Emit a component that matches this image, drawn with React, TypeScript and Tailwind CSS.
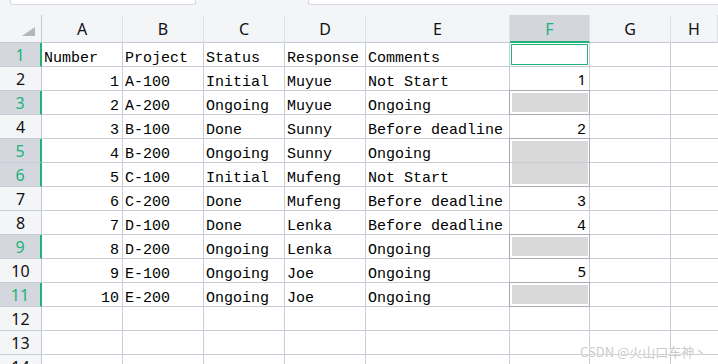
import React from "react";

type FKind = "active" | "num" | "gray" | "grayTop" | "grayBottom" | "none";
type Row = { n: number; cells: string[]; f: FKind; fv?: string; fSans?: boolean; sel?: boolean };

const rows: Row[] = [
  { n: 1, cells: ["Number", "Project", "Status", "Response", "Comments"], f: "active", sel: true },
  { n: 2, cells: ["1", "A-100", "Initial", "Muyue", "Not Start"], f: "num", fv: "1", fSans: true },
  { n: 3, cells: ["2", "A-200", "Ongoing", "Muyue", "Ongoing"], f: "gray", sel: true },
  { n: 4, cells: ["3", "B-100", "Done", "Sunny", "Before deadline"], f: "num", fv: "2" },
  { n: 5, cells: ["4", "B-200", "Ongoing", "Sunny", "Ongoing"], f: "grayTop", sel: true },
  { n: 6, cells: ["5", "C-100", "Initial", "Mufeng", "Not Start"], f: "grayBottom", sel: true },
  { n: 7, cells: ["6", "C-200", "Done", "Mufeng", "Before deadline"], f: "num", fv: "3" },
  { n: 8, cells: ["7", "D-100", "Done", "Lenka", "Before deadline"], f: "num", fv: "4" },
  { n: 9, cells: ["8", "D-200", "Ongoing", "Lenka", "Ongoing"], f: "gray", sel: true },
  { n: 10, cells: ["9", "E-100", "Ongoing", "Joe", "Ongoing"], f: "num", fv: "5", fSans: true },
  { n: 11, cells: ["10", "E-200", "Ongoing", "Joe", "Ongoing"], f: "gray", sel: true },
  { n: 12, cells: ["", "", "", "", ""], f: "none" },
  { n: 13, cells: ["", "", "", "", ""], f: "none" },
  { n: 14, cells: ["", "", "", "", ""], f: "none" },
];

const mono = { fontFamily: '"Liberation Mono", "Noto Sans CJK SC", monospace' };
const sans = { fontFamily: '"Noto Sans", "Liberation Sans", sans-serif' };

function FCell({ r }: { r: Row }) {
  const base = "relative border-r border-b border-[#c8ccd5] h-[24px]";
  if (r.f === "active") {
    return (
      <div className={base}>
        <div className="absolute left-[1px] top-[1px] right-[1px] bottom-[1px] border border-[#21b27a]" />
      </div>
    );
  }
  if (r.f === "num") {
    return (
      <div
        className={`${base} text-right pr-[3px] text-[15px] text-black whitespace-nowrap ${r.fSans ? "leading-[23px] pt-[1px]" : "leading-[23px] pt-[4px]"}`}
        style={r.fSans ? sans : mono}
      >
        {r.fv}
      </div>
    );
  }
  if (r.f === "gray") {
    return (
      <div className={`${base} pl-[2px] pr-[1px] py-[2px]`}>
        <div className="h-full bg-[#d9d9d9]" />
        <div className="absolute -left-px -top-px -right-px -bottom-px border border-[#a6aab2]" />
      </div>
    );
  }
  if (r.f === "grayTop") {
    return (
      <div className={`${base} pl-[2px] pr-[1px] pt-[2px]`}>
        <div className="h-full bg-[#d9d9d9]" />
        <div className="absolute -left-px -top-px -right-px -bottom-px border border-b-0 border-[#a6aab2]" />
      </div>
    );
  }
  if (r.f === "grayBottom") {
    return (
      <div className={`${base} pl-[2px] pr-[1px] pb-[2px]`}>
        <div className="h-full bg-[#d9d9d9]" />
        <div className="absolute -left-px top-0 -right-px -bottom-px border border-t-0 border-[#a6aab2]" />
      </div>
    );
  }
  return <div className={base} />;
}

export default function App() {
  const headers = ["A", "B", "C", "D", "E", "F", "G", "H"];
  return (
    <div className="w-[718px] h-[364px] overflow-hidden bg-white relative">
      {/* top strip */}
      <div className="h-[15px] bg-[#f4f5f7] flex items-start">
        <div className="ml-[10px] w-[186px] h-[5px] bg-white border border-t-0 border-[#d4d7dd] rounded-b-[3px]" />
        <div className="ml-[112px] flex-1 h-[5px] bg-white border border-t-0 border-r-0 border-[#d4d7dd] rounded-bl-[3px]" />
      </div>
      <div className="grid grid-cols-[42px_81px_81px_81px_81px_144px_80px_81px_1fr]">
        {/* header row */}
        <div className="h-[28px] bg-[#f4f5f7] border-r border-b border-[#c3c8d2] flex items-end justify-end pr-[6px] pb-[6px]">
          <svg width="13" height="9" viewBox="0 0 13 9">
            <polygon points="13,0 13,9 0,9" fill="#b4b6ba" />
          </svg>
        </div>
        {headers.map((h) => {
          const isF = h === "F";
          return (
            <div
              key={h}
              className={`h-[28px] flex items-center justify-center text-[16px] pt-[1px] ${
                isF
                  ? "bg-[#d3d6dc] text-[#21b27a] border-b-2 border-b-[#21b27a] border-r border-r-[#dde0e6]"
                  : "bg-[#f4f5f7] text-[#111] border-b border-b-[#c3c8d2] border-r border-r-[#dde0e6]"
              }`}
              style={sans}
            >
              {h}
            </div>
          );
        })}
        {rows.map((r) => (
          <React.Fragment key={r.n}>
            <div
              className={`h-[24px] border-b border-[#c8ccd5] flex items-center justify-center text-[16px] ${
                r.sel
                  ? "bg-[#d4d7dd] text-[#21b27a] border-r-2 border-r-[#21b27a]"
                  : "bg-[#f4f5f7] text-[#111] border-r border-r-[#c3c8d2]"
              }`}
              style={sans}
            >
              {r.n}
            </div>
            {r.cells.map((c, i) => (
              <div
                key={i}
                className={`h-[24px] border-r border-b border-[#c8ccd5] text-[15px] leading-[23px] pt-[4px] text-black whitespace-nowrap ${
                  i === 0 && r.n !== 1 ? "text-right pr-[3px]" : "pl-[2px]"
                }`}
                style={mono}
              >
                {c}
              </div>
            ))}
            <FCell r={r} />
            <div className="h-[24px] border-r border-b border-[#c8ccd5]" />
            <div className="h-[24px] border-b border-[#c8ccd5]" />
          </React.Fragment>
        ))}
      </div>
      <div
        className="absolute left-[580px] top-[342px] text-[13px] text-[#cacaca] whitespace-nowrap"
        style={{
          fontFamily: '"Noto Sans CJK SC", "Noto Sans", sans-serif',
          textShadow: "0 0 2px #fff, 0 0 1px #fff",
        }}
      >
        CSDN @火山口车神丶
      </div>
    </div>
  );
}
